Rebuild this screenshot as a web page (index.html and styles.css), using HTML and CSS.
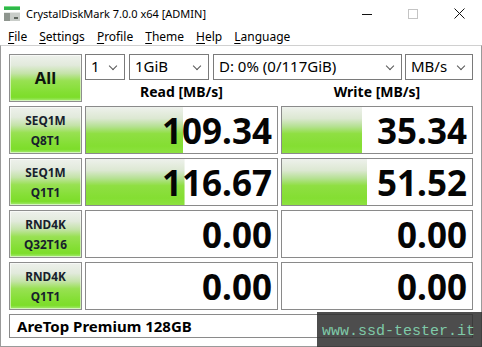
FILE: index.html
```html
<!DOCTYPE html>
<html lang="en">
<head>
  <meta charset="UTF-8">
  <title>CrystalDiskMark 7.0.0 x64 [ADMIN]</title>
  <link rel="stylesheet" href="styles.css">
</head>
<body>
  <div class="titlebar">
    <svg class="appicon" width="16" height="16" viewBox="0 0 16 16">
      <rect x="0" y="0" width="16" height="4" fill="#2fb84a"/>
      <rect x="0" y="0" width="16" height="1" fill="#7fe08a"/>
      <rect x="0" y="6" width="16" height="9" fill="#c9cdc9"/>
      <rect x="0" y="6" width="6" height="9" fill="#8e958e"/>
      <rect x="0" y="6" width="16" height="1" fill="#e6e8e6"/>
      <rect x="10" y="11" width="4" height="2" fill="#5f665f"/>
    </svg>
    <span class="title">CrystalDiskMark 7.0.0 x64 [ADMIN]</span>
    <span class="winbtn">
      <svg width="10" height="10" viewBox="0 0 10 10"><path d="M0 5.5H10" stroke="#111" stroke-width="1"/></svg>
    </span>
    <span class="winbtn">
      <svg width="10" height="10" viewBox="0 0 10 10"><rect x="0.5" y="0.5" width="9" height="9" fill="none" stroke="#c4c4c4"/></svg>
    </span>
    <span class="winbtn">
      <svg width="11" height="11" viewBox="0 0 11 11"><path d="M0.5 0.5L10.5 10.5M10.5 0.5L0.5 10.5" stroke="#111" stroke-width="1"/></svg>
    </span>
  </div>

  <div class="menubar">
    <span><u>F</u>ile</span>
    <span><u>S</u>ettings</span>
    <span><u>P</u>rofile</span>
    <span><u>T</u>heme</span>
    <span><u>H</u>elp</span>
    <span><u>L</u>anguage</span>
  </div>

  <div class="main">
    <div class="btn all">All</div>
    <div class="top">
      <div class="combos">
        <div class="combo c-count">1</div>
        <div class="combo c-size">1GiB</div>
        <div class="combo c-drive">D: 0% (0/117GiB)</div>
        <div class="combo c-unit">MB/s</div>
      </div>
      <div class="heads">
        <span>Read [MB/s]</span>
        <span>Write [MB/s]</span>
      </div>
    </div>

    <div class="btn"><span>SEQ1M</span><span>Q8T1</span></div>
    <div class="cell" style="--w: 51%">109.34</div>
    <div class="cell" style="--w: 42.3%">35.34</div>

    <div class="btn"><span>SEQ1M</span><span>Q1T1</span></div>
    <div class="cell" style="--w: 51.6%">116.67</div>
    <div class="cell" style="--w: 44.8%">51.52</div>

    <div class="btn"><span>RND4K</span><span>Q32T16</span></div>
    <div class="cell" style="--w: 0%">0.00</div>
    <div class="cell" style="--w: 0%">0.00</div>

    <div class="btn"><span>RND4K</span><span>Q1T1</span></div>
    <div class="cell" style="--w: 0%">0.00</div>
    <div class="cell" style="--w: 0%">0.00</div>

    <div class="model">AreTop Premium 128GB</div>
  </div>

  <div class="watermark">www.ssd-tester.it</div>
</body>
</html>
```

FILE: styles.css
```css
body {
  margin: 0;
  width: 482px;
  height: 347px;
  overflow: hidden;
  background: #fff;
  font-family: "Noto Sans", "Open Sans", sans-serif;
  color: #000;
  position: relative;
}

.titlebar {
  height: 27px;
  display: flex;
  align-items: center;
  font-size: 11px;
}

.appicon {
  margin: 0 6px 0 4px;
}

.title {
  flex: 1;
  color: #000;
}

.winbtn {
  width: 46px;
  height: 27px;
  display: flex;
  align-items: center;
  justify-content: center;
}

.menubar {
  height: 18px;
  display: flex;
  align-items: center;
  font-size: 12px;
  padding-left: 8px;
  gap: 12px;
}

.menubar u {
  text-decoration-thickness: 1px;
  text-underline-offset: 2px;
}

.main {
  border: 1px solid #9a9a9a;
  border-top-color: #d0d0d0;
  padding: 8px;
  height: 284px;
  display: grid;
  grid-template-columns: 73px 193px 192px;
  grid-template-rows: 48px repeat(4, 48px) 24px;
  column-gap: 3px;
  row-gap: 4px;
}

.btn {
  box-sizing: border-box;
  border: 1px solid #8e8e8e;
  box-shadow: inset 0 0 0 1px rgba(255, 255, 255, 0.55);
  background: linear-gradient(to bottom,
    #eef1ec 0%, #e2eadc 22%, #c4e3a8 40%, #98e152 56%,
    #84df34 80%, #7ddd2a 92%, #a7ea78 100%);
  display: flex;
  flex-direction: column;
  align-items: center;
  justify-content: center;
  font-weight: 700;
  font-size: 11.8px;
  line-height: 20px;
  color: #17202c;
}

.btn.all {
  font-size: 16.5px;
  color: #0e160e;
}

.top {
  grid-column: 2 / 4;
  display: flex;
  flex-direction: column;
}

.combos {
  display: flex;
  height: 26px;
  gap: 4px;
}

.combo {
  box-sizing: border-box;
  height: 26px;
  border: 1px solid #7a7a7a;
  background: #fff;
  font-size: 15px;
  line-height: 23px;
  padding-left: 5px;
  position: relative;
  white-space: nowrap;
}

.combo::after {
  content: "";
  position: absolute;
  right: 8px;
  top: 8px;
  width: 5px;
  height: 5px;
  border-right: 1px solid #555;
  border-bottom: 1px solid #555;
  transform: rotate(45deg);
}

.c-count { width: 40px; }
.c-size { width: 80px; }
.c-drive { width: 189px; margin-right: -1px; }
.c-unit { width: 68px; }

.heads {
  flex: 1;
  display: grid;
  grid-template-columns: 193px 192px;
  column-gap: 3px;
  align-items: center;
  text-align: center;
  font-weight: 700;
  font-size: 14px;
  padding-top: 1px;
}

.cell {
  box-sizing: border-box;
  border: 1px solid #8a8a8a;
  background-color: #fff;
  background-image: linear-gradient(to bottom,
    #eef1ec 0%, #dce8d2 25%, #b6e194 42%, #8fdf42 58%,
    #84de32 85%, #8de240 100%);
  background-repeat: no-repeat;
  background-size: var(--w) 100%;
  display: flex;
  align-items: center;
  justify-content: flex-end;
  padding-right: 5px;
  font-weight: 700;
  font-size: 35px;
  line-height: 1;
  color: #050505;
}

.model {
  grid-column: 1 / 4;
  box-sizing: border-box;
  border: 1px solid #8a8a8a;
  display: flex;
  align-items: center;
  padding-left: 7px;
  font-weight: 700;
  font-size: 15px;
}

.watermark {
  position: absolute;
  left: 317px;
  top: 312px;
  width: 165px;
  height: 35px;
  box-sizing: border-box;
  background: rgba(48, 48, 48, 0.86);
  color: #7fcaa8;
  font-family: "Liberation Mono", monospace;
  font-size: 15px;
  line-height: 39px;
  padding-left: 5px;
}
```
